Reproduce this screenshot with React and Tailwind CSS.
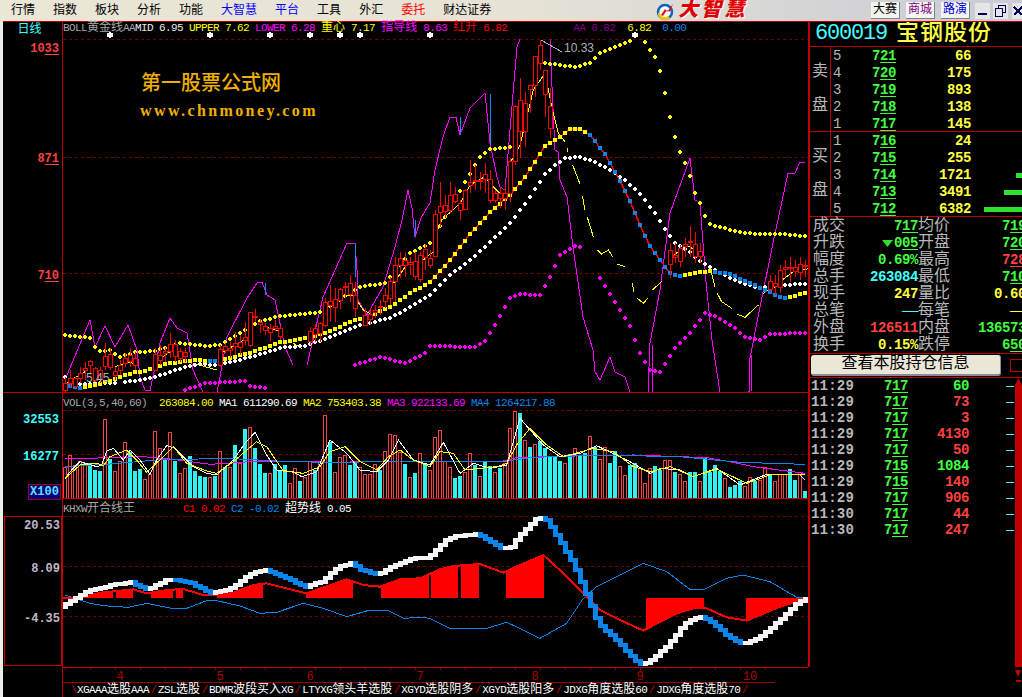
import React from "react";

const interp = (pts, x) => {
  if (x <= pts[0][0]) return pts[0][1];
  for (let i = 1; i < pts.length; i++) {
    if (x <= pts[i][0]) {
      const [a, b] = pts[i - 1];
      const [c, d] = pts[i];
      return b + ((d - b) * (x - a)) / (c - a || 1);
    }
  }
  return pts[pts.length - 1][1];
};
const z9 = (x, y) => [60 + x / 3, 220 + y / 3];
const z10 = (x, y) => [430 + x / 3, 30 + y / 3];
const Z5 = (a) => a.map(([x, y]) => [x / 3, 385 + y / 3]);
const Z6 = (a) => a.map(([x, y]) => [400 + x / 3, 385 + y / 3]);
const Z7 = (a) => a.map(([x, y]) => [x / 3, 510 + y / 3]);
const Z8 = (a) => a.map(([x, y]) => [420 + x / 3, 510 + y / 3]);
const pl = (a) => a.map((p) => p.join(",")).join(" ");
const range = (a, b, s = 5) => {
  const r = [];
  for (let x = a; x <= b; x += s) r.push(x);
  return r;
};

const upper = [[65,335],[90,338],[95,347],[100,351],[110,350],[120,357],[135,352],[155,351],[180,343],[205,346],[220,345],[240,333],[260,321],[280,316],[320,312],[360,287],[385,283],[410,253],[430,243],[465,182],[480,157],[490,149],[510,147],[543,63],[555,64],[575,67],[590,63],[600,53],[630,41],[635,35],[645,42],[655,57],[660,71],[665,93],[670,117],[675,137],[680,152],[685,163],[690,176],[695,193],[700,203],[705,216],[710,224],[720,227],[740,232],[760,234],[780,234],[805,236]];
const mid = [[65,385],[80,388],[100,384],[135,372],[145,371],[165,364],[185,361],[195,360],[215,361],[225,359],[250,353],[280,342],[290,341],[305,338],[325,333],[355,320],[365,318],[390,307],[410,293],[430,282],[450,260],[470,234],[490,212],[510,195],[525,177],[545,146],[560,137],[570,129],[580,129],[590,135],[605,154],[620,181],[630,201],[640,225],[650,246],[660,260],[670,273],[680,276],[695,273],[710,271],[730,274],[750,283],[765,290],[780,297],[785,298],[805,293]];
const lower = [[65,377],[70,384],[115,383],[140,380],[155,377],[185,367],[200,364],[215,365],[230,362],[250,357],[285,347],[305,346],[335,335],[360,325],[390,318],[410,307],[430,295],[450,275],[470,260],[490,242],[510,223],[530,197],[545,174],[555,165],[565,158],[580,157],[595,162],[610,170],[625,180],[640,194],[655,213],[665,229],[675,243],[690,252],[700,261],[720,273],[740,282],[760,288],[780,285],[805,284]];
const magD = [[185,390],[205,383],[245,381],[250,386],[265,388],[355,365],[380,357],[405,363],[425,353],[430,346],[475,347],[485,341],[495,325],[510,298],[520,294],[540,295],[550,277],[560,255],[575,246],[580,247],[600,278],[615,302],[630,326],[640,353],[650,370],[660,372],[675,348],[690,333],[705,313],[715,316],[735,328],[745,337],[760,340],[770,334],[805,333]];
const magLines = [
  [[65,380],[90,320],[95,347],[105,326],[115,347],[128,325],[137,350],[140,377],[145,390],[150,391],[160,343],[170,318],[177,328],[187,333],[193,370],[203,392],[210,420],[217,392],[220,377],[227,337],[247,298],[257,283],[262,282],[267,295],[275,300],[285,347],[293,365]],
  [[307,365],[323,297],[347,243],[355,243],[357,270],[358,300],[367,315],[383,287],[395,247],[402,220],[408,190],[412,208],[415,237],[421,218],[430,203],[435,170],[443,137],[450,117],[456,117],[460,135],[470,108],[485,93],[490,143],[497,177],[500,187],[505,190],[510,130],[517,47],[520,39]],
  [[550,39],[552,87],[555,150],[558,152],[560,180],[567,197],[573,247],[583,317],[593,350],[595,372],[600,380],[610,357],[615,372],[625,377],[630,392],[640,430],[648,392],[650,343],[660,290],[670,213],[690,158],[695,200],[700,203],[703,243],[706,282],[712,340],[720,392],[735,430],[749,392],[750,358],[758,317],[773,243],[788,173],[795,173],[800,162],[805,162]],
  [[652,392],[652,345]],
  [[751,392],[752,355]],
];
const thinY = [
  [[20,490],[50,470],[75,455]].map((p) => z9(...p)),
  [[165,440],[200,428],[230,430]].map((p) => z9(...p)),
  [[295,420],[330,395]].map((p) => z9(...p)),
  [[400,430],[470,450]].map((p) => z9(...p)),
  [[490,395],[560,355]].map((p) => z9(...p)),
  [[610,318],[660,335]].map((p) => z9(...p)),
  [[700,370],[725,385]].map((p) => z9(...p)),
  [[760,345],[800,300]].map((p) => z9(...p)),
  [[845,225],[880,225],[910,270],[940,285]].map((p) => z9(...p)),
  [[1000,190],[1040,135],[1090,120],[1120,95]].map((p) => z9(...p)),
  ...[
    [[15,620],[35,570],[90,520],[120,465],[165,440],[185,465],[210,490]],
    [[240,400],[270,345],[310,180],[345,130],[365,230],[385,310],[405,335]],
    [[412,355],[412,365]],[[428,405],[450,462]],[[457,497],[465,540]],[[472,562],[490,620]],
    [[502,660],[515,672],[535,660],[548,680]],[[562,702],[585,710]],[[607,760],[612,785]],
    [[622,805],[640,820],[653,805]],[[667,780],[695,755]],[[720,685],[770,645],[810,670]],
    [[845,730],[855,772]],[[862,790],[875,815],[905,835]],[[920,852],[945,862],[985,825]],
    [[1000,790],[1050,755],[1090,725],[1140,715]],
  ].map((s) => s.map((p) => z10(...p))),
];
const c9 = [[15,490,510,470,516],[30,475,490,450,500],[45,475,500,470,505],[60,460,475,440,490],[75,445,450,425,480],[90,425,435,420,465],[105,445,480,440,485],[120,452,478,440,490],[135,408,438,370,450],[150,402,442,385,450],[165,455,465,440,480],[180,435,450,420,465],[195,415,430,400,440],[210,405,425,385,440],[225,415,435,395,450],[285,402,450,385,450],[300,405,420,375,435],[315,393,400,380,425],[330,372,395,340,415],[345,372,410,360,425],[360,393,415,385,425],[375,398,408,385,425],[480,388,435,375,440],[495,378,392,370,400],[510,385,392,365,415],[525,370,378,335,405],[540,366,382,345,405],[555,352,362,305,375],[570,277,375,277,380],[585,288,292,268,305],[600,308,312,298,340],[615,320,332,310,345],[630,325,338,312,365],[645,320,325,300,332],[660,325,350,320,360],[750,335,365,322,375],[765,325,342,312,365],[780,310,340,305,365],[795,247,315,235,320],[810,245,255,195,305],[825,237,262,205,305],[840,208,240,205,268],[855,198,202,185,235],[870,190,222,165,245],[885,225,265,185,290],[915,285,315,265,318],[930,282,298,265,315],[945,272,278,255,295],[960,258,262,240,285],[975,225,245,205,265],[990,183,235,170,255],[1005,135,185,110,245],[1020,115,135,95,175],[1035,120,135,100,170],[1050,128,132,110,165],[1065,125,170,95,180],[1080,105,178,95,185],[1095,87,113,72,150],[1110,115,135,90,145]];
const c10 = [[15,553,678,540,680],[30,528,548,455,590],[45,525,543,495,565],[60,495,540,455,550],[75,492,515,470,520],[90,520,540,510,570],[105,480,537,478,540],[120,457,467,390,490],[135,450,455,405,480],[150,450,455,425,480],[165,432,448,400,490],[180,448,510,420,520],[195,490,510,480,520],[210,490,505,470,535],[225,490,505,465,540],[240,393,490,385,515],[255,228,395,225,405],[270,210,305,145,385],[285,220,305,185,350],[300,165,178,165,250],[315,78,165,78,200],[330,45,100,30,120],[345,122,193,122,260],[360,230,295,175,325],[720,660,703,640,745],[735,677,683,640,700],[750,655,695,645,710],[765,643,650,625,680],[780,635,637,588,680],[795,643,680,605,700],[810,665,680,640,700],[1020,753,777,735,790],[1035,760,770,735,795],[1050,720,773,705,790],[1065,713,718,690,740],[1080,712,714,682,755],[1095,712,725,690,740],[1110,703,728,682,750],[1125,705,710,690,740]];
const candles = [
  ...c9.map(([x, a, b, h, l]) => [60 + x / 3, 220 + a / 3, 220 + b / 3, 220 + h / 3, 220 + l / 3]),
  ...c10.map(([x, a, b, h, l]) => [430 + x / 3, 30 + a / 3, 30 + b / 3, 30 + h / 3, 30 + l / 3]),
];

const isBlue = (x) => (x >= 65 && x <= 80) || (x >= 210 && x <= 215) || (x >= 590 && x <= 680) || (x >= 715 && x <= 785);

const Dot = ({ x, y, c }) => {
  const yy = Math.round(y);
  return (
    <g fill={c}>
      <rect x={x - 2} y={yy - 1} width="4" height="2" />
      <rect x={x - 1} y={yy - 2} width="2" height="4" />
    </g>
  );
};

function PriceSvg() {
  return (
    <svg width="745" height="370" viewBox="63 22 745 370" className="block" shapeRendering="crispEdges">
      {[39, 157, 273].map((y) => (
        <line key={y} x1="63" x2="808" y1={y} y2={y} stroke="#700000" strokeDasharray="3 3" />
      ))}
      {magLines.map((s, i) => (
        <polyline key={i} points={pl(s)} fill="none" stroke="#ff00ff" strokeWidth="1" />
      ))}
      {[[265.7,283,295],[355,244,277],[415,220,237],[460,117,135],[490,94,145]].map(([x, a, b]) => (
        <line key={x} x1={x} x2={x} y1={a} y2={b} stroke="#0090ff" />
      ))}
      {thinY.map((s, i) => (
        <polyline key={i} points={pl(s)} fill="none" stroke="#ffff00" strokeWidth="1" />
      ))}
      {range(65, 805).filter((x) => !(x > 512 && x < 543) && x !== 640).map((x) => (
        <Dot key={x} x={x} y={interp(upper, x)} c="#ffff00" />
      ))}
      {range(65, 805).filter((x) => !(x > 115 && x < 125)).map((x) => (
        <Dot key={x} x={x} y={interp(lower, x)} c="#ffffff" />
      ))}
      {[...range(185, 265), ...range(355, 580), ...range(600, 805)].map((x) => (
        <Dot key={x} x={x} y={interp(magD, x)} c="#ff00ff" />
      ))}
      <polyline points={pl(mid.filter((p) => p[0] >= 430 && p[0] <= 670))} fill="none" stroke="#ff0000" strokeWidth="1.5" />
      {range(65, 805).map((x) => (
        <rect key={x} x={x - 2} y={Math.round(interp(mid, x)) - 2} width="4" height="4" fill={isBlue(x) ? "#0a84e8" : "#ffff00"} />
      ))}
      {candles.map(([x, a, b, h, l], i) => (
        <g key={i}>
          <line x1={x} x2={x} y1={h} y2={a} stroke="#ff0000" />
          <line x1={x} x2={x} y1={b} y2={l} stroke="#ff0000" />
          <rect x={x - 2} y={a} width="4" height={Math.max(b - a, 1)} fill="#000000" stroke="#ff0000" />
        </g>
      ))}
      <line x1="541" y1="40" x2="562" y2="52" stroke="#b0b0b0" />
      <text x="564" y="52" fontSize="12" fill="#b0b0b0" fontFamily="'Liberation Sans',sans-serif">10.33</text>
      <text x="86" y="382" fontSize="12" fill="#b0b0b0" fontFamily="'Liberation Sans',sans-serif">5.45</text>
      {[110, 210, 270, 310, 340, 360, 430, 635].map((x) => (
        <g key={x} fill="#ffffff">
          <rect x={x - 3} y="33" width="6" height="4" />
          <rect x={x - 1} y="32" width="2" height="6" />
        </g>
      ))}
    </svg>
  );
}

const volA = [[195,1,245],[210,1,210],[225,1,240],[240,1,228],[255,1,235],[270,0,235],[285,0,255],[300,0,258],[315,1,102],[330,0,222],[345,1,258],[360,1,228],[375,1,172],[390,0,200],[405,0,258],[420,0,252],[435,1,282],[450,1,268],[465,1,138],[480,1,190],[495,0,220],[510,1,142],[525,0,228],[540,1,265],[555,1,250],[570,0,213],[585,0,258],[600,0,272],[615,0,275],[630,1,275],[645,0,272],[660,1,198],[675,0,245],[690,1,245],[705,0,180],[720,1,235],[735,0,132],[750,1,127],[765,0,190],[780,0,237],[795,0,265],[810,1,265],[825,0,237],[840,0,255],[855,0,240],[870,1,295],[885,1,250],[900,0,288],[915,1,275],[930,1,228],[945,0,255],[960,1,228],[975,1,90],[990,0,170],[1005,1,262],[1020,1,215],[1035,1,210],[1050,0,240],[1065,0,228],[1080,1,245],[1095,1,268],[1110,1,268],[1125,1,238],[1140,0,255],[1155,1,198],[1170,1,148],[1185,1,150]];
const volB = [[0,1,200],[15,0,237],[30,1,277],[45,0,263],[60,1,205],[75,0,235],[90,1,255],[105,1,157],[120,1,135],[135,1,228],[150,1,247],[165,0,280],[180,0,272],[195,1,262],[210,1,205],[225,0,240],[240,1,273],[255,0,232],[270,0,243],[285,1,260],[300,0,248],[315,1,235],[330,1,130],[345,1,78],[360,0,85],[375,1,165],[390,0,185],[405,1,178],[420,0,168],[435,0,188],[450,0,212],[465,0,212],[480,0,228],[495,1,233],[510,0,208],[525,1,190],[540,0,210],[555,0,205],[570,1,153],[585,0,185],[600,1,222],[615,1,185],[630,0,233],[645,0,198],[660,1,243],[675,1,270],[690,0,240],[705,0,235],[720,1,250],[735,1,295],[750,1,250],[765,0,243],[780,0,255],[795,1,225],[810,1,225],[825,0,260],[840,1,268],[855,1,288],[870,0,262],[885,0,260],[900,1,288],[915,0,218],[930,0,260],[945,0,240],[960,0,258],[975,1,280],[990,0,305],[1005,0,300],[1020,0,288],[1035,1,303],[1050,1,277],[1065,0,288],[1080,1,285],[1095,1,247],[1110,0,270],[1125,1,288],[1140,1,268],[1155,1,268],[1170,0,252],[1185,0,285],[1200,1,262],[1215,0,318]];
const bars = [...volA.map(([x, r, y]) => [x / 3, r, 385 + y / 3]), ...volB.map(([x, r, y]) => [400 + x / 3, r, 385 + y / 3])];
const vLines = [
  ["#ff00ff", [...Z5([[195,222],[430,215],[510,222],[630,238],[780,228],[900,228],[1000,232],[1200,228]]), ...Z6([[150,228],[300,230],[350,218],[550,212],[700,210],[920,218],[1000,232],[1060,245],[1215,265]])]],
  ["#0a84e8", [...Z5([[195,245],[320,238],[470,225],[680,220],[830,228],[1000,233],[1200,228]]), ...Z6([[320,228],[400,217],[620,210],[850,216],[1020,232],[1215,238]])]],
  ["#ffffff", [...Z5([[195,280],[215,255],[240,230],[290,245],[305,240],[320,198],[340,190],[370,225],[390,195],[420,225],[450,268],[470,225],[500,182],[525,190],[580,245],[620,265],[650,270],[700,225],[735,175],[765,142],[800,210],[830,255],[880,260],[905,275],[950,260],[990,165],[1040,205],[1080,255],[1130,260],[1165,225],[1195,165]]), ...Z6([[40,225],[90,240],[130,172],[180,265],[220,235],[270,250],[320,240],[360,100],[430,180],[480,215],[540,205],[590,182],[690,230],[750,265],[780,250],[840,255],[880,275],[950,250],[1020,300],[1100,268],[1200,270],[1215,285]])]],
  ["#ffff00", [...Z5([[195,280],[240,240],[290,235],[310,242],[330,215],[380,195],[410,225],[440,262],[490,215],[520,185],[560,235],[620,258],[650,265],[700,230],[770,170],[800,185],[850,258],[910,265],[960,245],[990,200],[1035,185],[1080,230],[1130,255],[1165,215],[1200,195]]), ...Z6([[40,225],[90,245],[120,200],[160,205],[195,255],[290,245],[320,235],[350,180],[390,130],[440,180],[490,215],[580,190],[640,200],[700,245],[750,260],[810,245],[880,275],[950,252],[1040,295],[1110,270],[1215,268]])]],
];

function VolSvg() {
  return (
    <svg width="745" height="123" viewBox="63 393 745 123" className="block" shapeRendering="crispEdges">
      {[410, 454].map((y) => (
        <line key={y} x1="63" x2="808" y1={y} y2={y} stroke="#700000" strokeDasharray="3 3" />
      ))}
      {bars.map(([x, r, y], i) => {
        const xr = Math.round(x);
        return r ? (
          <rect key={i} x={xr - 1.5} y={Math.round(y) + 0.5} width="3" height={498 - Math.round(y)} fill="#000000" stroke="#ff4040" />
        ) : (
          <rect key={i} x={xr - 2} y={Math.round(y)} width="4" height={498 - Math.round(y)} fill="#30f0f0" />
        );
      })}
      <line x1="63" x2="808" y1="498.5" y2="498.5" stroke="#d00000" />
      {vLines.map(([c, p]) => (
        <polyline key={c} points={pl(p)} fill="none" stroke={c} strokeWidth="1" />
      ))}
    </svg>
  );
}

const thick = [...Z7([[190,290],[240,262],[270,243],[300,235],[345,225],[400,215],[415,225],[450,238],[510,208],[540,210],[580,220],[640,250],[700,235],[760,190],[800,180],[870,205],[920,232],[970,215],[1020,172],[1060,158],[1090,180],[1140,195],[1190,165],[1245,145]]), ...Z8([[30,145],[50,125],[90,85],[120,78],[180,72],[250,115],[275,115],[310,70],[360,22],[385,30],[430,100],[470,170],[510,265],[540,340],[600,395],[640,440],[665,462],[690,458],[750,405],[800,340],[845,318],[880,335],[930,380],[975,402],[1020,385],[1080,335],[1130,285],[1165,265]])];
const redL = [...Z7([[190,265],[245,262],[300,248],[400,238],[440,250],[500,240],[550,237],[610,255],[650,255],[700,248],[760,225],[800,220],[860,235],[920,250],[1040,208],[1090,225],[1140,230],[1200,208],[1260,205]]), ...Z8([[60,178],[100,168],[180,162],[250,188],[300,165],[370,135],[430,190],[490,250],[540,300],[600,330],[670,362],[770,310],[820,295],[860,295],[920,322],[980,332],[1080,290],[1165,265]])];
const blueL = [...Z7([[195,255],[270,280],[310,287],[385,292],[440,280],[520,296],[560,295],[620,272],[650,272],[720,288],[780,310],[830,307],[910,280],[970,295],[1040,320],[1110,300],[1160,300],[1210,325],[1260,322]]), ...Z8([[30,325],[90,355],[140,355],[200,355],[260,337],[310,360],[360,385],[440,340],[490,265],[530,230],[600,195],[670,160],[740,185],[810,238],[850,240],[920,205],[970,195],[1050,215],[1130,262],[1165,265]])];
const areaSeg = [[82,113],[116,133],[151,173],[176,183],[217,263],[306,353],[381,420],[420,429],[431,458],[461,479],[506,544],[646,704],[746,808]];
const area = (a, b) => {
  const top = range(a, b, 1).map((x) => [x, interp(redL, x)]);
  return pl([[a, 598], ...top, [b, 598]]);
};

function OscSvg() {
  return (
    <svg width="745" height="151" viewBox="63 516 745 151" className="block" shapeRendering="crispEdges">
      {[516, 566, 616].map((y) => (
        <line key={y} x1="63" x2="808" y1={y + 0.5} y2={y + 0.5} stroke="#700000" strokeDasharray="3 3" />
      ))}
      {areaSeg.map(([a, b]) => (
        <polygon key={a} points={area(a, b)} fill="#ff0000" />
      ))}
      <polyline points={pl(blueL)} fill="none" stroke="#0a84e8" strokeWidth="1" />
      <polyline points={pl(redL.filter((p) => p[0] >= 63))} fill="none" stroke="#ff0000" strokeWidth="2" />
      {range(63, 803).map((x) => {
        const a = interp(thick, x);
        const b = interp(thick, x + 5);
        const top = Math.min(a, b) - 2;
        const h = Math.abs(b - a) + 4;
        return <rect key={x} x={x} y={top} width="5" height={h} fill={b > a + 0.3 ? "#0a84e8" : "#f4f4f4"} />;
      })}
    </svg>
  );
}

function XAxisSvg() {
  const labels = [[120, "4"], [220, "5"], [310, "6"], [420, "7"], [535, "8"], [640, "9"], [750, "10"]];
  return (
    <svg width="745" height="14" viewBox="63 668 745 14" className="block" shapeRendering="crispEdges">
      {range(63, 803, 25).map((x) => (
        <line key={x} x1={x + 2} x2={x + 2} y1="668" y2="670" stroke="#a00000" />
      ))}
      {labels.map(([x, t]) => (
        <text key={t} x={x} y="680" textAnchor="middle" fontSize="12" fill="#b00000" fontFamily="'Liberation Mono',monospace">{t}</text>
      ))}
    </svg>
  );
}

const isCJK = (s) => /[\u4e00-\u9fff]/.test(s);
const Mix = ({ t }) =>
  t.split(/([\u4e00-\u9fff]+)/).filter(Boolean).map((s, i) =>
    isCJK(s) ? (
      <span key={i} className="text-[12px] tracking-normal">{s}</span>
    ) : (
      <span key={i}>{s}</span>
    )
  );

const small = "text-[11px] tracking-[-0.6px] whitespace-pre leading-[13px]";
const big = "text-[14px] font-bold tracking-[-0.4px] leading-[17px] whitespace-nowrap";

const U = ({ v }) => (
  <>
    {v.slice(0, -2)}
    <span className="underline decoration-1 underline-offset-2">{v.slice(-2)}</span>
  </>
);

function Header() {
  const items = ["行情", "指数", "板块", "分析", "功能", "大智慧", "平台", "工具", "外汇", "委托", "财达证券"];
  const color = (t) => (t === "大智慧" || t === "平台" ? "text-[#0000ff]" : t === "委托" ? "text-[#ff0000]" : "text-black");
  return (
    <div className="h-[21px] flex items-center bg-linear-to-r from-[#ebe7d6] via-[#e6e3d5] to-[#c9cbd6] overflow-hidden">
      <div className="flex gap-[18px] pl-[11px]">
        {items.map((t) => (
          <span key={t} className={`text-[12px] leading-[16px] ${color(t)}`}>{t}</span>
        ))}
      </div>
      <div className="ml-[164px] flex items-center gap-[3px]">
        <svg width="20" height="20" viewBox="0 0 20 20">
          <circle cx="10" cy="11" r="7" fill="#ffffff" stroke="#1060c0" strokeWidth="2.5" />
          <path d="M3 12a7 7 0 0 0 12 5l-2-2a5 5 0 0 1-8-3z" fill="#f0c800" />
          <path d="M6 14l4-6 2 3 6-8-3 8-3-2-4 6z" fill="#e01010" />
        </svg>
        <span className="text-[20px] leading-[20px] font-black italic tracking-[3px] text-[#e00000] [text-shadow:1px_1px_0_#ffffff]">大智慧</span>
      </div>
      <div className="ml-auto flex items-center h-full">
        <div className="flex gap-[6px]">
          {[["大赛", "text-black"], ["商城", "text-[#800080]"], ["路演", "text-[#0000e0]"]].map(([t, c]) => (
            <span key={t} className={`w-[29px] h-[17px] bg-[#f4f4f0] border-b border-r border-[#808080] text-center text-[12px] leading-[16px] ${c}`}>{t}</span>
          ))}
        </div>
        <svg width="47" height="16" viewBox="0 0 47 16" className="ml-[5px]" shapeRendering="crispEdges">
          <rect x="0" y="0" width="15" height="16" fill="#e6e6e6" />
          <rect x="3" y="10" width="9" height="2" fill="#000060" />
          <rect x="18" y="0" width="15" height="16" fill="#e6e6e6" />
          <rect x="23.5" y="2.5" width="7" height="7" fill="none" stroke="#000060" />
          <rect x="20.5" y="5.5" width="7" height="8" fill="#e6e6e6" stroke="#000060" />
          <rect x="37" y="0" width="10" height="16" fill="#e6e6e6" />
          <path d="M39 4l8 8M47 4l-8 8" stroke="#000060" strokeWidth="1.5" />
        </svg>
      </div>
    </div>
  );
}

const GREEN = "text-[#40ff40]";
const YELLOW = "text-[#ffff40]";
const RED = "text-[#ff4040]";
const CYAN = "text-[#40ffff]";
const GREY = "text-[#b8b8b8]";

const Level = ({ n, p, v, bar }) => (
  <div className={`flex h-[17px] items-center ${big}`}>
    <span className={`w-[41px] shrink-0 pl-[2px] font-normal ${GREY}`}>{n}</span>
    <span className={`w-[25px] shrink-0 ${GREEN}`}><U v={p} /></span>
    <span className={`w-[74px] shrink-0 text-right ${YELLOW}`}>{v}</span>
    <span className="flex-1 flex justify-end">
      {bar ? <span className="h-[5px] bg-[#30e030]" style={{ width: bar }} /> : null}
    </span>
  </div>
);

const Book = ({ a, b, rows }) => (
  <div className="flex h-[85px] shrink-0 border-b border-[#c00000]">
    <div className={`w-[21px] shrink-0 border-r border-[#c00000] flex flex-col items-center justify-center gap-[18px] text-[16px] leading-[16px] ${GREY}`}>
      <span>{a}</span>
      <span>{b}</span>
    </div>
    <div className="flex-1 min-w-0 pt-[1px] h-[85px]">
      {rows.map((r) => (
        <Level key={r.n} {...r} />
      ))}
    </div>
  </div>
);

const Stat = ({ a, va, b, vb }) => (
  <div className={`flex h-[17px] items-center ${big}`}>
    <span className={`w-[35px] shrink-0 pl-[3px] text-[16px] font-normal tracking-normal leading-[17px] ${GREY}`}>{a}</span>
    <span className="w-[73px] shrink-0 text-right">{va}</span>
    <span className={`w-[33px] shrink-0 text-[16px] font-normal tracking-normal leading-[17px] ${GREY}`}>{b}</span>
    <span className="w-[75px] shrink-0 text-right">{vb}</span>
  </div>
);

function Right() {
  const ticks = [["11:29","717","60",GREEN],["11:29","717","73",RED],["11:29","717","3",RED],["11:29","717","4130",RED],["11:29","717","50",RED],["11:29","715","1084",GREEN],["11:29","715","140",RED],["11:29","717","906",RED],["11:30","717","44",RED],["11:30","717","247",RED]];
  return (
    <div className="w-[214px] shrink-0 border-l-2 border-[#c00000] flex flex-col overflow-hidden">
      <div className="h-[25px] border-b border-[#c00000] shrink-0 flex items-center pl-[5px]">
        <span className={`text-[22px] tracking-[-1.2px] leading-[24px] ${CYAN}`}>600019</span>
        <span className={`ml-[9px] text-[23px] tracking-[1px] leading-[24px] font-medium ${YELLOW}`}>宝钢股份</span>
      </div>
      <Book a="卖" b="盘" rows={[{n:"5",p:"721",v:"66"},{n:"4",p:"720",v:"175"},{n:"3",p:"719",v:"893"},{n:"2",p:"718",v:"138"},{n:"1",p:"717",v:"145"}]} />
      <Book a="买" b="盘" rows={[{n:"1",p:"716",v:"24"},{n:"2",p:"715",v:"255"},{n:"3",p:"714",v:"1721",bar:6},{n:"4",p:"713",v:"3491",bar:18},{n:"5",p:"712",v:"6382",bar:38}]} />
      <div className="h-[137px] border-b border-[#c00000] shrink-0 pt-[1px]">
        <Stat a="成交" va={<span className={GREEN}><U v="717" /></span>} b="均价" vb={<span className={GREEN}><U v="719" /></span>} />
        <Stat a="升跌" va={<span className={`inline-flex items-center ${GREEN}`}><svg width="11" height="7" viewBox="0 0 11 7" className="mr-[1px]"><path d="M0 0h11L5.5 7z" fill="#30e030" /></svg><U v="005" /></span>} b="开盘" vb={<span className={GREEN}><U v="720" /></span>} />
        <Stat a="幅度" va={<span className={GREEN}>0.69%</span>} b="最高" vb={<span className={RED}><U v="728" /></span>} />
        <Stat a="总手" va={<span className={CYAN}>263084</span>} b="最低" vb={<span className={GREEN}><U v="710" /></span>} />
        <Stat a="现手" va={<span className={YELLOW}>247</span>} b="量比" vb={<span className={YELLOW}>0.60</span>} />
        <Stat a="总笔" va={<span className={`font-normal ${CYAN}`}>——</span>} b="每笔" vb={<span className={`font-normal ${YELLOW}`}>——</span>} />
        <Stat a="外盘" va={<span className={RED}>126511</span>} b="内盘" vb={<span className={GREEN}>136573</span>} />
        <Stat a="换手" va={<span className={YELLOW}>0.15%</span>} b="跌停" vb={<span className={GREEN}><U v="650" /></span>} />
      </div>
      <div className="h-[24px] shrink-0 border-b border-[#c00000] flex items-center pl-[1px]">
        <button className="w-[190px] h-[21px] shrink-0 bg-[#ebe7d6] rounded-[3px] border-b-2 border-r border-[#8a8aa0] text-black text-[16px] leading-[19px]">查看本股持仓信息</button>
        <span className="ml-[9px] w-[14px] h-[13px] border border-[#c00000] shrink-0" />
      </div>
      <div className="flex-1 flex min-h-0">
        <div className="flex-1 min-w-0 pl-[1px]">
          {ticks.map(([t, p, v, c], i) => (
            <div key={i} className={`flex h-[16px] items-center ${big}`}>
              <span className={`w-[73px] shrink-0 tracking-[0.2px] ${GREY}`}>{t}</span>
              <span className={`w-[25px] shrink-0 ${GREEN}`}><U v={p} /></span>
              <span className={`w-[60px] shrink-0 text-right ${c}`}>{v}</span>
              <span className="ml-[37px] w-[8px] h-px bg-[#40ffff] shrink-0" />
            </div>
          ))}
        </div>
        <div className="w-[7px] shrink-0 flex flex-col">
          <svg width="7" height="7" viewBox="0 0 7 7" className="shrink-0"><path d="M3.5 0L7 7H0z" fill="#c00000" /></svg>
          <div className="flex-1 bg-[#c00000]" />
        </div>
      </div>
    </div>
  );
}

const Axis = ({ children, cls }) => (
  <div className={`w-[60px] shrink-0 border-r border-[#c00000] flex flex-col items-end pr-[3px] text-[12px] font-bold leading-[14px] ${cls}`}>
    {children}
  </div>
);

export default function App() {
  const tabs = ["XGAAA选股AAA", "ZSL选股", "BDMR波段买入XG", "LTYXG领头羊选股", "XGYD选股阴多", "XGYD选股阳多", "JDXG角度选股60", "JDXG角度选股70"];
  return (
    <div className="w-[1022px] h-[697px] overflow-hidden bg-black flex [font-family:'Liberation_Mono','Noto_Sans_CJK_SC',monospace]">
      <div className="w-[3px] shrink-0 bg-[#eeeee6]" />
      <div className="w-[1019px] flex flex-col">
        <div className="-ml-[3px] w-[1022px]"><Header /></div>
        <div className="h-[646px] shrink-0 flex border-t border-[#c00000]">
          <div className="w-[805px] shrink-0 flex flex-col">
            <div className="flex h-[371px] shrink-0 border-b border-[#c00000]">
              <Axis cls="text-[#ff4040]">
                <span className="self-center h-[20px] pt-[1px] pr-[3px] text-[#40ffff] font-normal">日线</span>
                <span><U v="1033" /></span>
                <span className="mt-[96px]"><U v="871" /></span>
                <span className="mt-[103px]"><U v="710" /></span>
              </Axis>
              <div className="relative">
                <PriceSvg />
                <div className={`absolute top-0 left-0 w-[745px] text-[#a8a8a8] ${small}`}>
                  <Mix t="BOLL黄金线AA" /><span className="text-[#e8e8e8]">MID 6.95 </span>
                  <span className="text-[#ffff00]">UPPER 7.62 </span>
                  <span className="text-[#ff00ff]">LOWER 6.28 </span>
                  <span className="text-[#ffff00]"><Mix t="重心 7.17 " /></span>
                  <span className="text-[#ff00ff]"><Mix t="指导线 8.63 " /></span>
                  <span className="text-[#ff0000]"><Mix t="红升 6.82" /></span>
                  <span className="ml-[66px] text-[#800080]">AA 6.82</span>
                  <span className="ml-[12px] text-[#ffff00]">6.82</span>
                  <span className="ml-[11px] text-[#0a84e8]">0.00</span>
                </div>
                <div className="absolute left-[78px] top-[51px] text-[20px] leading-[24px] font-medium text-[#f0b000]">第一股票公式网</div>
                <div className="absolute left-[77px] top-[79px] text-[16px] leading-[20px] font-bold tracking-[2.4px] text-[#f0b000] [font-family:'Liberation_Serif',serif]">www.chnmoney.com</div>
              </div>
            </div>
            <div className="flex h-[123px] shrink-0">
              <Axis cls="text-[#40ffff]">
                <span className="mt-[20px]">32553</span>
                <span className="mt-[23px]">16277</span>
                <span className="mt-[21px] -mr-[1px] w-[31px] h-[14px] text-center bg-[#000080] text-[#60e0ff] outline outline-[#a00000] leading-[14px]">X100</span>
              </Axis>
              <div className="relative">
                <VolSvg />
                <div className={`absolute top-[4px] left-0 text-[#a8a8a8] ${small}`}>
                  VOL(3,5,40,60)  <span className="text-[#ffff00]">263084.00 </span>
                  <span className="text-[#ffffff]">MA1 611290.69 </span>
                  <span className="text-[#ffff00]">MA2 753403.38 </span>
                  <span className="text-[#ff00ff]">MA3 922133.69 </span>
                  <span className="text-[#0a84e8]">MA4 1264217.88</span>
                </div>
                <div className={`absolute top-[110px] left-0 text-[#a8a8a8] ${small}`}>
                  <Mix t="KHXW开合线王" />
                  <span className="ml-[48px] text-[#ff0000]">C1 0.02 </span>
                  <span className="text-[#0a84e8]">C2 -0.02 </span>
                  <span className="text-[#ffffff]"><Mix t="超势线 0.05" /></span>
                </div>
              </div>
            </div>
            <div className="flex h-[151px] shrink-0">
              <div className="w-[60px] shrink-0 border-r border-[#c00000] pl-[1px]">
                <div className="h-[150px] w-[58px] border border-[#c00000] flex flex-col items-end pr-[1px] pt-[2px] text-[12px] font-bold leading-[14px] text-[#c0b8c8]">
                  <span>20.53</span>
                  <span className="mt-[29px]">8.09</span>
                  <span className="mt-[36px]">-4.35</span>
                </div>
              </div>
              <OscSvg />
            </div>
          </div>
          <Right />
        </div>
        <div className="flex flex-1 min-h-0">
          <div className="w-[60px] shrink-0 border-r border-[#c00000]" />
          <div className="w-[745px] shrink-0 border-t border-[#c00000]">
            <div className="h-[15px] w-[712px] border-b border-[#a00000] overflow-hidden">
              <XAxisSvg />
            </div>
            <div className={`flex pl-[8px] pt-[1px] text-white ${small}`}>
              <span className="w-[6px] text-[#c00000]">\</span>
              {tabs.map((t) => (
                <span key={t} className="flex">
                  <span><Mix t={t} /></span>
                  <span className="w-[9px] text-center text-[#c00000]">/</span>
                </span>
              ))}
            </div>
          </div>
          <div className="flex-1 flex justify-end pr-[1px] pt-[3px]">
            <svg width="6" height="14" viewBox="0 0 6 14"><path d="M0 0h6L3 7zM1 10h5v2H1z" fill="#c00000" /></svg>
          </div>
        </div>
      </div>
    </div>
  );
}
